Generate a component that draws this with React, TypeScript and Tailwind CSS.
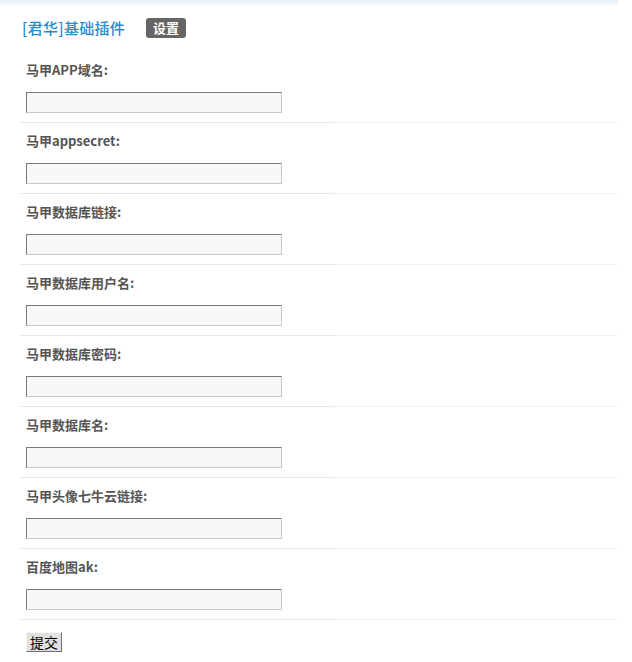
import React from "react";

const fields = [
  "马甲APP域名:",
  "马甲appsecret:",
  "马甲数据库链接:",
  "马甲数据库用户名:",
  "马甲数据库密码:",
  "马甲数据库名:",
  "马甲头像七牛云链接:",
  "百度地图ak:",
];

const font = { fontFamily: '"Noto Sans CJK SC", "Liberation Sans", sans-serif' };

const Divider = () => (
  <div className="ml-[20px] flex h-[1px]">
    <div className="w-[315px] bg-[#e2ebf1]" />
    <div className="flex-1 bg-[#eef0f1]" />
  </div>
);

export default function App() {
  return (
    <div className="w-[632px] h-[662px] bg-white" style={font}>
      <div className="w-[618px]">
        {/* top bar */}
        <div className="h-[8px] bg-gradient-to-b from-[#e4eff8] to-white" />
        {/* title */}
        <div className="flex items-center h-[21px] mt-[9px] pl-[22px]">
          <span className="text-[15px] leading-[20px] font-medium text-[#2a8ccc] tracking-[0.3px]">[君华]基础插件</span>
          <span className="ml-[21px] h-[20px] w-[40px] flex items-center justify-center rounded-[3px] bg-[#666666] text-white text-[13px] font-bold">
            设置
          </span>
        </div>
        {/* form rows */}
        <div className="mt-[22px]">
          {fields.map((label, i) => (
            <div key={i}>
              {i > 0 && <Divider />}
              <div className={`pl-[26px] pb-[9px] ${i > 0 ? "pt-[8px]" : ""}`}>
                <div className="text-[13px] leading-[20px] font-bold text-[#555555]">{label}</div>
                <input
                  type="text"
                  className="mt-[12px] block w-[256px] h-[21px] bg-[#f8f8f8] border border-t-[#7a7a7a] border-l-[#7a7a7a] border-b-[#c8c8c8] border-r-[#c8c8c8] outline-none"
                />
              </div>
            </div>
          ))}
          <Divider />
          <div className="pl-[26px] pt-[9px]">
            <button className="w-[36px] h-[20px] text-[14px] leading-[16px] text-black bg-[#e1e1e1] border border-t-[#f4f4f4] border-l-[#f4f4f4] border-b-[#6f6f6f] border-r-[#6f6f6f]">
              提交
            </button>
          </div>
        </div>
      </div>
    </div>
  );
}
